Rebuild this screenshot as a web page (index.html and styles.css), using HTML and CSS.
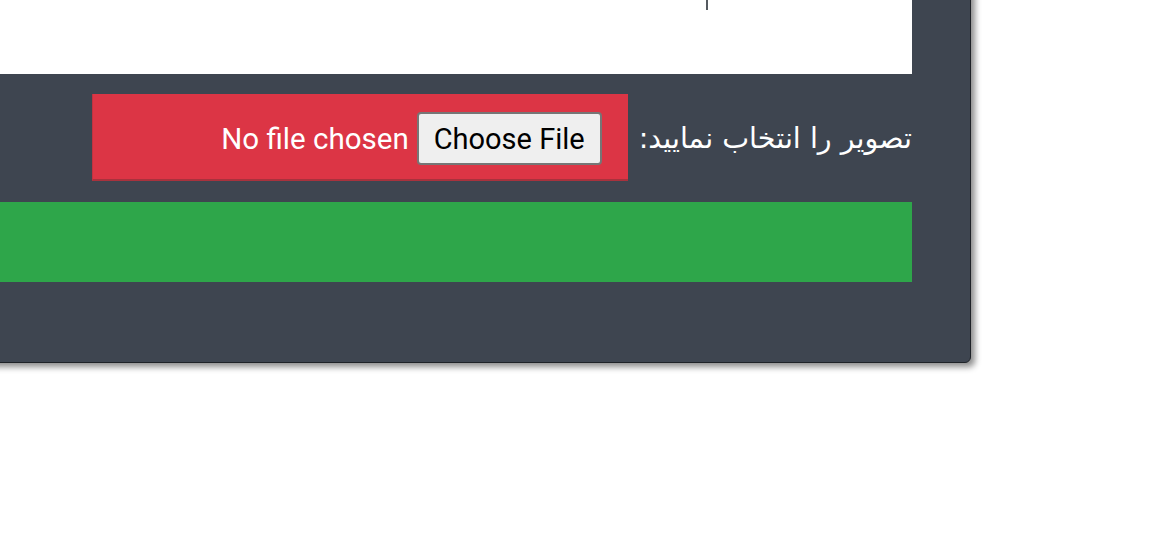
FILE: index.html
```html
<!DOCTYPE html>
<html lang="fa">
<head>
<meta charset="utf-8">
<link rel="stylesheet" href="styles.css">
</head>
<body>
<div class="panel">
  <div class="sheet">
    <div class="sheet-text"><span class="caret"></span><span class="peek">نام یی</span></div>
  </div>
  <div class="row">
    <label class="label" for="img">تصویر را انتخاب نمایید:</label>
    <input class="file" id="img" type="file">
  </div>
  <div class="bar"></div>
</div>
</body>
</html>
```
FILE: styles.css
```css
html, body {
  margin: 0;
  padding: 0;
  background: #ffffff;
  overflow: hidden;
  height: 560px;
}
.panel {
  box-sizing: border-box;
  width: 1200px;
  margin: -60px 0 0 -229px;
  padding: 0 58px 80px 20px;
  background: #3e4550;
  border: 1px solid #1e2227;
  border-radius: 0 0 6px 0;
  box-shadow: 4px 4px 6px rgba(0, 0, 0, 0.45);
  direction: rtl;
}
.sheet {
  height: 133px;
  background: #ffffff;
  position: relative;
}
.sheet-text {
  position: absolute;
  top: 30px;
  right: 40px;
  height: 39px;
  display: flex;
  align-items: flex-end;
}
.caret {
  position: absolute;
  right: 164px;
  bottom: 0;
  width: 2px;
  height: 20px;
  background: #555a60;
}
.peek {
  font-family: "DejaVu Sans", sans-serif;
  font-size: 22px;
  color: #495057;
  line-height: 22px;
  margin-bottom: 12px;
}
.row {
  display: flex;
  align-items: center;
  gap: 11px;
  margin-top: 20px;
}
.label {
  font-family: "DejaVu Sans", sans-serif;
  font-size: 28.6px;
  color: #ffffff;
}
.file {
  box-sizing: border-box;
  width: 536px;
  height: 87px;
  margin: 0;
  padding: 18px 26px 0 10px;
  background: #dc3545;
  border: none;
  border-bottom: 2px solid #a8323d;
  border-left: 1px solid #c03341;
  color: #ffffff;
  font-family: Roboto, "Liberation Sans", sans-serif;
  font-size: 29.5px;
  direction: rtl;
}
.file::file-selector-button {
  font-family: Roboto, "Liberation Sans", sans-serif;
  font-size: 29px;
  color: #000000;
  background: #efefef;
  border: 2px solid #767676;
  border-radius: 4px;
  height: 53px;
  padding: 0 15px;
  margin: 0 0 0 8px;
}
.bar {
  height: 80px;
  margin-top: 21px;
  background: #2ea64a;
}
```
